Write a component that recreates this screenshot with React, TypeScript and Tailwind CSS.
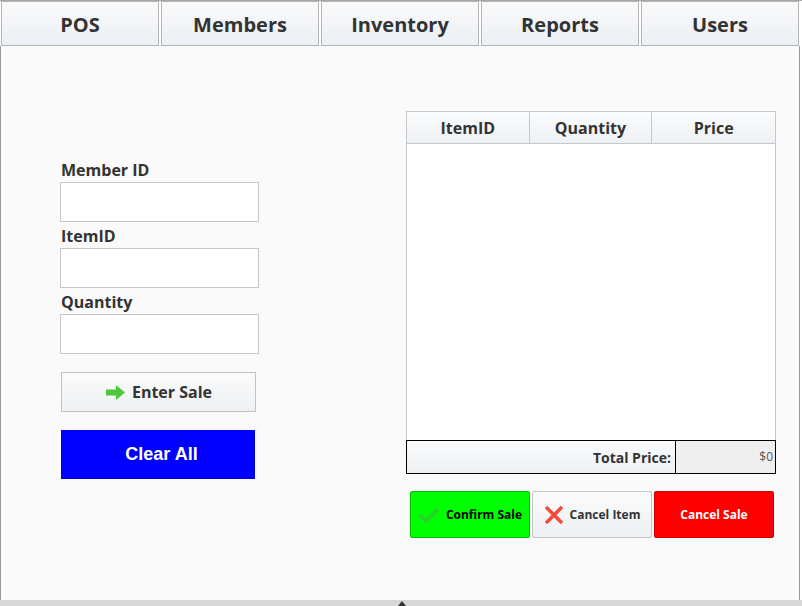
import React from 'react';

const tabs = ['POS', 'Members', 'Inventory', 'Reports', 'Users'];
const fields = ['Member ID', 'ItemID', 'Quantity'];
const columns = ['ItemID', 'Quantity', 'Price'];

function ArrowIcon() {
    return (
        <svg width="21" height="17" viewBox="0 0 21 17">
            <path d="M1 5.5 H11 V1 L20 8.5 L11 16 V11.5 H1 Z" fill="#4cc83a" />
        </svg>
    );
}

function CheckIcon() {
    return (
        <svg width="22" height="18" viewBox="0 0 22 18">
            <path d="M2 9.5 L8 15 L20 3" fill="none" stroke="#3fb83f" strokeOpacity="0.6" strokeWidth="4" />
        </svg>
    );
}

function CrossIcon() {
    return (
        <svg width="20" height="20" viewBox="0 0 20 20">
            <path d="M2 2 L18 18 M18 2 L2 18" fill="none" stroke="#f44a3a" strokeWidth="3.5" />
        </svg>
    );
}

export default function App() {
    return (
        <div className="w-[802px] h-[606px] flex flex-col bg-white text-[#333] font-['Open_Sans',sans-serif]">
            {/* Top tabs */}
            <div className="h-[46px] border-t border-[#a8a8a8] flex gap-[2px] pl-[1px]">
                {tabs.map(tab => (
                    <button
                        key={tab}
                        className="w-[158px] h-[45px] pt-[2px] border border-[#b4b4b4] bg-gradient-to-b from-[#f9fafb] to-[#eceff3] text-[20px] font-bold text-[#333]"
                    >
                        {tab}
                    </button>
                ))}
            </div>

            {/* Main panel */}
            <div className="w-[800px] h-[554px] border-l border-r border-[#9a9a9a] bg-[#fafafa] flex">
                {/* Form */}
                <div className="ml-[59px] mt-[113px] w-[199px] flex flex-col">
                    {fields.map(label => (
                        <div key={label} className="flex flex-col mb-[3px]">
                            <label className="pl-[1px] text-[16px] leading-[22px] font-bold text-[#333]">{label}</label>
                            <input className="mt-[1px] h-[40px] w-[199px] border border-[#c4c8cc] bg-white outline-none" />
                        </div>
                    ))}
                    <button className="mt-[15px] ml-[1px] w-[195px] h-[40px] border border-[#c2c2c2] bg-gradient-to-b from-[#fbfbfb] to-[#eef0f3] flex items-center justify-center gap-[6px] text-[16px] font-bold text-[#333]">
                        <ArrowIcon />
                        Enter Sale
                    </button>
                    <button className="mt-[18px] ml-[1px] w-[194px] h-[49px] pl-[7px] bg-[#0000ff] border border-[#0000d8] text-white text-[18px] font-bold font-['Liberation_Sans',Arial,sans-serif]">
                        Clear All
                    </button>
                </div>

                {/* Sale table */}
                <div className="ml-[147px] mt-[65px] w-[370px] flex flex-col">
                    <div className="h-[330px] border border-[#c4c8cc] bg-white flex flex-col">
                        <div className="h-[32px] grid grid-cols-3 border-b border-[#c4c8cc] bg-gradient-to-b from-[#fafbfc] to-[#eef1f4]">
                            {columns.map((col, i) => (
                                <div
                                    key={col}
                                    className={`flex items-center justify-center text-[16px] font-bold text-[#333] ${i < 2 ? 'border-r border-[#c4c8cc]' : ''}`}
                                >
                                    {col}
                                </div>
                            ))}
                        </div>
                    </div>
                    <div className="h-[34px] -mt-[1px] border border-black flex">
                        <div className="w-[269px] flex items-center justify-end pr-[4px] text-[14px] font-bold text-[#333] bg-gradient-to-b from-[#fafbfc] to-[#eef0f3] border-r border-black">
                            Total Price:
                        </div>
                        <div className="flex-1 flex items-center justify-end pr-[2px] bg-[#efefef] text-[12px] text-[#555]">
                            $0
                        </div>
                    </div>
                    <div className="mt-[17px] ml-[4px] flex gap-[2px]">
                        <button className="w-[120px] h-[47px] bg-[#00ff00] border border-[#00c400] rounded-[2px] flex items-center justify-center gap-[6px] text-[12px] font-bold text-black">
                            <CheckIcon />
                            Confirm Sale
                        </button>
                        <button className="w-[120px] h-[47px] border border-[#c4c4c4] rounded-[2px] bg-gradient-to-b from-[#fbfbfb] to-[#eef0f3] flex items-center justify-center gap-[6px] text-[12px] font-bold text-[#333]">
                            <CrossIcon />
                            Cancel Item
                        </button>
                        <button className="w-[120px] h-[47px] bg-[#ff0000] border border-[#d00000] rounded-[2px] flex items-center justify-center text-[12px] font-bold text-white">
                            Cancel Sale
                        </button>
                    </div>
                </div>
            </div>

            {/* Bottom bar */}
            <div className="h-[6px] w-[802px] bg-[#d8d8d8] flex justify-center">
                <div className="ml-[2px] mt-[1px] w-0 h-0 border-l-[4px] border-r-[4px] border-b-[5px] border-l-transparent border-r-transparent border-b-[#333]" />
            </div>
        </div>
    );
}
